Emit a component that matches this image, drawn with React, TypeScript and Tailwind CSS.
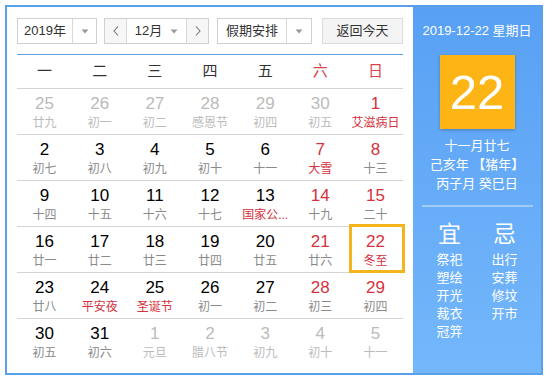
import React from "react";

type Cell = { d: string; l: string; other?: boolean; red?: boolean; lred?: boolean; today?: boolean };

const rows: Cell[][] = [
  [
    { d: "25", l: "廿九", other: true },
    { d: "26", l: "初一", other: true },
    { d: "27", l: "初二", other: true },
    { d: "28", l: "感恩节", other: true },
    { d: "29", l: "初四", other: true },
    { d: "30", l: "初五", other: true },
    { d: "1", l: "艾滋病日", red: true, lred: true },
  ],
  [
    { d: "2", l: "初七" },
    { d: "3", l: "初八" },
    { d: "4", l: "初九" },
    { d: "5", l: "初十" },
    { d: "6", l: "十一" },
    { d: "7", l: "大雪", red: true, lred: true },
    { d: "8", l: "十三", red: true },
  ],
  [
    { d: "9", l: "十四" },
    { d: "10", l: "十五" },
    { d: "11", l: "十六" },
    { d: "12", l: "十七" },
    { d: "13", l: "国家公...", lred: true },
    { d: "14", l: "十九", red: true },
    { d: "15", l: "二十", red: true },
  ],
  [
    { d: "16", l: "廿一" },
    { d: "17", l: "廿二" },
    { d: "18", l: "廿三" },
    { d: "19", l: "廿四" },
    { d: "20", l: "廿五" },
    { d: "21", l: "廿六", red: true },
    { d: "22", l: "冬至", red: true, lred: true, today: true },
  ],
  [
    { d: "23", l: "廿八" },
    { d: "24", l: "平安夜", lred: true },
    { d: "25", l: "圣诞节", lred: true },
    { d: "26", l: "初一" },
    { d: "27", l: "初二" },
    { d: "28", l: "初三", red: true },
    { d: "29", l: "初四", red: true },
  ],
  [
    { d: "30", l: "初五" },
    { d: "31", l: "初六" },
    { d: "1", l: "元旦", other: true },
    { d: "2", l: "腊八节", other: true },
    { d: "3", l: "初九", other: true },
    { d: "4", l: "初十", other: true },
    { d: "5", l: "十一", other: true },
  ],
];

const weekdays = ["一", "二", "三", "四", "五", "六", "日"];

function Caret() {
  return (
    <svg width="8" height="5" viewBox="0 0 8 5">
      <path d="M0.5 0.5 L7.5 0.5 L4 4.5 Z" fill="#999" />
    </svg>
  );
}

export default function App() {
  const font = { fontFamily: '"Liberation Sans", "Noto Sans CJK SC", sans-serif' };
  return (
    <div className="w-[547px] h-[381px] bg-white pt-[5px] pl-[5px]" style={font}>
      <div className="flex w-[538px] h-[370px] border-2 border-[#5b9fe8]">
        <div className="flex-1 pl-[10px] pr-[10px] pt-[11px] flex flex-col">
          {/* controls */}
          <div className="flex h-[26px] text-[13px] text-[#333]">
            <div className="flex w-[80px] border border-[#cfcfcf] bg-white">
              <div className="w-[55px] flex items-center justify-center border-r border-[#d8d8d8]">2019年</div>
              <div className="flex-1 flex items-center justify-center"><Caret /></div>
            </div>
            <div className="flex w-[105px] ml-[7px] border border-[#cfcfcf]">
              <div className="w-[22px] flex items-center justify-center bg-[#f6f6f6] border-r border-[#d8d8d8] text-[#777]">
                <svg width="6" height="10" viewBox="0 0 6 10"><path d="M5 0.5 L1 5 L5 9.5" stroke="#777" fill="none" strokeWidth="1.1" /></svg>
              </div>
              <div className="w-[60px] flex items-center justify-center gap-[8px] bg-white border-r border-[#d8d8d8]">
                <span>12月</span>
                <Caret />
              </div>
              <div className="flex-1 flex items-center justify-center bg-[#f6f6f6]">
                <svg width="6" height="10" viewBox="0 0 6 10"><path d="M1 0.5 L5 5 L1 9.5" stroke="#777" fill="none" strokeWidth="1.1" /></svg>
              </div>
            </div>
            <div className="flex w-[95px] ml-[8px] border border-[#cfcfcf] bg-white">
              <div className="w-[69px] flex items-center justify-center border-r border-[#d8d8d8]">假期安排</div>
              <div className="flex-1 flex items-center justify-center"><Caret /></div>
            </div>
            <div className="w-[81px] ml-[10px] border border-[#dcdcdc] bg-[#f4f4f4] flex items-center justify-center">返回今天</div>
          </div>
          <div className="mt-[10px] h-px bg-[#5ea2e6]" />
          {/* header */}
          <div className="grid grid-cols-7 h-[33px] items-center text-[15px]">
            {weekdays.map((w, i) => (
              <div key={w} className={"text-center " + (i >= 5 ? "text-[#d9434b]" : "text-[#333]")}>{w}</div>
            ))}
          </div>
          {rows.map((r, ri) => (
            <div key={ri} className="grid grid-cols-7 h-[46px] border-t border-[#d4d4d4]">
              {r.map((c, ci) => (
                <div key={ci} className="relative flex flex-col items-center pt-[5px]">
                  {c.today && (
                    <div className="absolute left-[1px] right-[-2px] top-[-3px] bottom-[-1px] border-[3px] border-[#f4b41d]" />
                  )}
                  <div
                    className={
                      "text-[17px] leading-[20px] " +
                      (c.other ? "text-[#bbbbbb]" : c.red ? "text-[#d4323c]" : "text-black")
                    }
                  >
                    {c.d}
                  </div>
                  <div
                    className={
                      "mt-[1px] text-[12px] leading-[16px] whitespace-nowrap " +
                      (c.other ? "text-[#bbbbbb]" : c.lred ? "text-[#d4323c]" : "text-[#8a8a8a]")
                    }
                  >
                    {c.l}
                  </div>
                </div>
              ))}
            </div>
          ))}
        </div>
        {/* right panel */}
        <div className="w-[130px] bg-gradient-to-b from-[#58a0f4] to-[#74b7fb] flex flex-col items-center text-white">
          <div className="mt-[15px] text-[13px] leading-[18px]">2019-12-22 星期日</div>
          <div className="mt-[15px] w-[75px] h-[74px] bg-[#fdb515] shadow-[0_1px_3px_rgba(0,0,0,0.25)] flex items-center justify-center text-[49px] leading-none">
            22
          </div>
          <div className="mt-[7px] text-[13px] leading-[19px] text-center">
            <div>十一月廿七</div>
            <div>己亥年 【猪年】</div>
            <div>丙子月 癸巳日</div>
          </div>
          <div className="mt-[12px] w-[111px] h-[2px] bg-[#a3cbf7]" />
          <div className="mt-[14px] grid grid-cols-2 w-[110px]">
            <div className="flex flex-col items-center">
              <div className="text-[23px] leading-[26px]">宜</div>
              <div className="mt-[4px] text-[13px] leading-[18px] text-center">
                <div>祭祀</div>
                <div>塑绘</div>
                <div>开光</div>
                <div>裁衣</div>
                <div>冠笄</div>
              </div>
            </div>
            <div className="flex flex-col items-center">
              <div className="text-[23px] leading-[26px]">忌</div>
              <div className="mt-[4px] text-[13px] leading-[18px] text-center">
                <div>出行</div>
                <div>安葬</div>
                <div>修坟</div>
                <div>开市</div>
              </div>
            </div>
          </div>
        </div>
      </div>
    </div>
  );
}
